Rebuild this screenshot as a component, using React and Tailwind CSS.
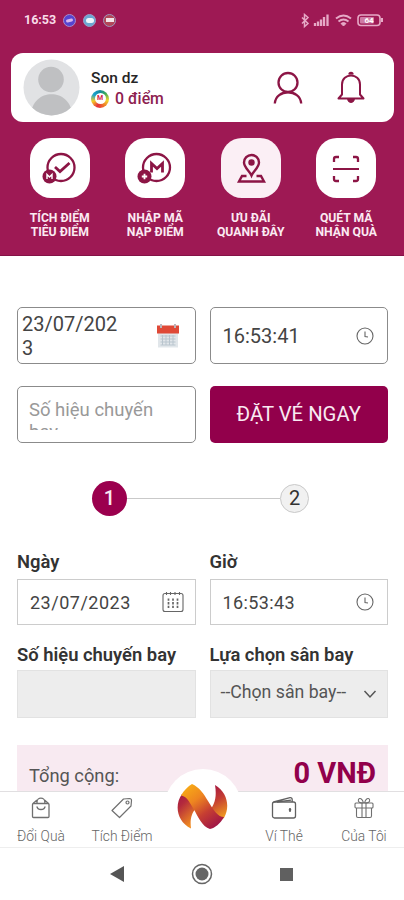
const quickActions = [
  { id: "earn", lines: ["TÍCH ĐIỂM", "TIÊU ĐIỂM"], icon: EarnIcon, tile: "bg-white" },
  { id: "code", lines: ["NHẬP MÃ", "NẠP ĐIỂM"], icon: CodeIcon, tile: "bg-white" },
  { id: "near", lines: ["ƯU ĐÃI", "QUANH ĐÂY"], icon: NearbyIcon, tile: "bg-[#fbeff5]" },
  { id: "scan", lines: ["QUÉT MÃ", "NHẬN QUÀ"], icon: ScanIcon, tile: "bg-white" },
];

/* ICONS */

function EarnIcon() {
  return (
    <svg width="60" height="60" viewBox="0 0 60 60" fill="none" stroke="#8c1545" strokeWidth="2.3">
      <circle cx="31" cy="29.5" r="13.5" />
      <path d="M25 29l5 4.5 9.500-8.500" strokeWidth="2.8" />
      <circle cx="19.5" cy="38.5" r="7" fill="#8c1545" stroke="none" />
      <path d="M17 41v-4.5l2.5 2.5 2.5-2.5V41" stroke="#fff" strokeWidth="1.4" />
    </svg>
  );
}

function CodeIcon() {
  return (
    <svg width="60" height="60" viewBox="0 0 60 60" fill="none" stroke="#8c1545" strokeWidth="2.3">
      <circle cx="31.5" cy="29.5" r="13.5" />
      <path d="M26.500 34.500v-9l5.500 5 5.500-5v9" strokeWidth="2.8" />
      <circle cx="19.5" cy="38.5" r="7" fill="#8c1545" stroke="none" />
      <path d="M16.800 38.500h5.400M19.500 35.800v5.400" stroke="#fff" strokeWidth="1.8" />
    </svg>
  );
}

function NearbyIcon() {
  return (
    <svg width="60" height="60" viewBox="0 0 60 60" fill="none" stroke="#8c1545" strokeWidth="2.4">
      <path d="M30.500 37.500c-2-4.500-7.500-8-7.500-13a7.500 7.500 0 0 1 15 0c0 5-5.500 8.500-7.500 13z" />
      <circle cx="30.500" cy="24.500" r="3.200" fill="#8c1545" stroke="none" />
      <path d="M25.500 38h-4.500l-3 5.500h25L40 38h-4.500" />
    </svg>
  );
}

function ScanIcon() {
  return (
    <svg width="60" height="60" viewBox="0 0 60 60" fill="none" stroke="#8c1545" strokeWidth="2.3">
      <path d="M18 24v-3q0-2 2-2h3M37 19h3q2 0 2 2v3M42 38v3q0 2-2 2h-3M23 43h-3q-2 0-2-2v-3" />
      <path d="M17 31h26" strokeWidth="2" />
    </svg>
  );
}

function ClockIcon() {
  return (
    <svg width="18" height="18" viewBox="0 0 18 18" fill="none" stroke="#666" strokeWidth="1.1">
      <circle cx="9" cy="9" r="8" />
      <path d="M9 4.500v5l3 .5" />
    </svg>
  );
}

function CalendarEmoji() {
  return (
    <svg width="24" height="26" viewBox="0 0 24 26">
      <path d="M2 10h20v14.500H2z" fill="#e1e6ea" />
      <path d="M4.500 13h15M4.500 16h15M4.500 19h15M4.500 22h15M6.500 12v10M10 12v10M13.500 12v10M17 12v10" stroke="#b9c5ce" strokeWidth="1" />
      <path d="M1 2.500h22v8H1z" fill="#df4937" />
      <path d="M5 1v4M19 1v4" stroke="#b9b4ba" strokeWidth="2" />
    </svg>
  );
}

function CalendarIcon() {
  return (
    <svg width="22" height="22" viewBox="0 0 22 22" fill="none" stroke="#666" strokeWidth="1.1">
      <rect x="1" y="2.500" width="20" height="18" rx="2" />
      <path d="M4.500 1v3M8.500 1v3M13 1v3M17.500 1v3" />
      <path d="M6.500 7.500v9.500M11 7.500v9.500M15.500 7.500v9.500" strokeWidth="1.700" strokeDasharray="2.300 1.300" />
    </svg>
  );
}

function BagIcon() {
  return (
    <svg width="20" height="22" viewBox="0 0 20 22" fill="none" stroke="#707070" strokeWidth="1.300">
      <rect x="1.500" y="6.500" width="16.500" height="14" rx="1" />
      <path d="M2 6.500l4-3.500M17.500 6.500l-4-3.500M6 6.500V5a3.900 3.900 0 0 1 7.800 0v1.500" />
      <path d="M6 9.500c.5 4 7.500 4 8 0" strokeWidth="1.500" />
    </svg>
  );
}

function TagIcon() {
  return (
    <svg width="22" height="22" viewBox="0 0 22 22" fill="none" stroke="#707070" strokeWidth="1.200">
      <path d="M1 13.500L12.500 2l6-.5q2 0 2 2L20 9 8.500 20.500z" strokeLinejoin="round" />
      <circle cx="16.500" cy="5.500" r="1.500" />
    </svg>
  );
}

function WalletIcon() {
  return (
    <svg width="26" height="24" viewBox="0 0 26 24" fill="none" stroke="#606060" strokeWidth="1.300">
      <rect x="1.500" y="6" width="23" height="16" rx="2" />
      <path d="M2.500 6L19 1.700q2-.2 2.200 2V6M6 6l14-1.800" />
      <circle cx="19" cy="13.800" r="1.300" fill="#606060" stroke="none" />
      <path d="M19 12v4" strokeWidth="1.500" />
    </svg>
  );
}

function GiftIcon() {
  return (
    <svg width="20" height="22" viewBox="0 0 20 22" fill="none" stroke="#707070" strokeWidth="1.100">
      <rect x="1" y="6" width="18" height="5" rx="1" />
      <path d="M2.500 11v8q0 1.500 1.500 1.500h12q1.500 0 1.500-1.500v-8M8 6v14.500M12 6v14.500" />
      <path d="M9.500 6C6 6 3.500 5 4.500 2.500c1-2 4-1 5 3.500M10.500 6c3.500 0 6-1 5-3.500-1-2-4-1-5 3.500" />
    </svg>
  );
}

function LogoN() {
  return (
    <svg width="52" height="48" viewBox="0 0 52 48">
      <defs>
        <linearGradient id="nLeft" x1="0" y1="0" x2=".5" y2="1">
          <stop offset="0" stopColor="#a01745" />
          <stop offset=".35" stopColor="#b42a3c" />
          <stop offset="1" stopColor="#f08b20" />
        </linearGradient>
        <linearGradient id="nMid" x1=".1" y1="0" x2=".8" y2="1">
          <stop offset="0" stopColor="#f9b015" />
          <stop offset=".35" stopColor="#ee8520" />
          <stop offset=".65" stopColor="#c63e32" />
          <stop offset="1" stopColor="#9c1249" />
        </linearGradient>
        <linearGradient id="nRight" x1=".2" y1="0" x2=".5" y2="1">
          <stop offset="0" stopColor="#a31443" />
          <stop offset=".45" stopColor="#c43d33" />
          <stop offset="1" stopColor="#f3a01f" />
        </linearGradient>
      </defs>
      <path d="M5 11C-3 22 0 39 14 45.500c-1-8 0-15 5-20L12 10z" fill="url(#nLeft)" />
      <path d="M38 2c13 8 15 22 9 33l-7 4-10-9c8-7 10-16 8-28z" fill="url(#nRight)" />
      <path d="M4 12.500C7 7 11 3.500 15 1c7 3 12 10 16 17 6 10 10 16 16 16-4 7-9 11-14 12-8-2-12-13-17-21C12 18 9 13 4 12.500z" fill="url(#nMid)" />
    </svg>
  );
}

/* SECTIONS */

function StatusBar() {
  return (
    <div className="flex h-[53px] items-start justify-between pt-[12px] pr-[20px] pl-[24px]">
      <div className="flex h-4 items-center gap-[7px]">
        <span className="mr-[-1px] w-[33px] text-[12.500px] font-bold whitespace-nowrap text-[#f8dce8]">16:53</span>
        <span className="flex size-[13px] items-center justify-center rounded-full border border-[#a78bca] bg-[#5644d0]">
          <span className="h-[3px] w-[7px] -rotate-12 rounded bg-[#d9b4ee]" />
        </span>
        <span className="flex size-[13px] items-center justify-center rounded-full border border-[#98a0c7] bg-[#6aa6d2]">
          <span className="h-[5px] w-[8px] rounded bg-[#eef5fb]" />
        </span>
        <span className="flex size-[13px] items-center justify-center rounded-full border border-[#9c98bc] bg-[#b34558]">
          <span className="h-[4px] w-[8px] bg-[#f3e5e9]" />
        </span>
      </div>
      <svg width="84" height="16" viewBox="0 0 84 16" fill="none" stroke="#e6a9c6" className="mt-px">
        <path d="M2 4.500l6 6-3.500 3V1.500L8 4.500l-6 6" strokeWidth="1.500" />
        <path d="M15 13v-3M18 13V8.500M21 13V6.500M24 13V4M27.500 13V1.500" strokeWidth="2.300" />
        <path d="M36 5.500q7.500-6 15 0M38.500 8.500q5-4 10 0" strokeWidth="2" />
        <path d="M41 10.500q2.500-2 5 0L43.500 13z" fill="#e6a9c6" />
        <rect x="58" y="2" width="22" height="10.500" rx="3" strokeWidth="1.600" />
        <rect x="60" y="4" width="14" height="6.500" rx="1" fill="#cf7ba5" stroke="none" />
        <path d="M82 5v4" strokeWidth="2" />
        <text x="69" y="10.300" textAnchor="middle" className="text-[8px] font-bold" fill="#fff" stroke="none">64</text>
      </svg>
    </div>
  );
}

function ProfileCard() {
  return (
    <div className="mr-[10px] ml-[11px] flex h-[69px] items-center rounded-[12px] bg-white pr-[29px] pl-[12px]">
      <svg width="57" height="57" viewBox="0 0 57 57">
        <clipPath id="avatar"><circle cx="28.500" cy="28.500" r="28" /></clipPath>
        <g clipPath="url(#avatar)">
          <path d="M0 0h57v57H0z" fill="#e1e2e4" />
          <circle cx="28" cy="20.500" r="12.800" fill="#bfc0c2" />
          <path d="M8 57c0-29 41-29 41 0z" fill="#bfc0c2" />
        </g>
      </svg>
      <div className="mt-[2px] ml-[11px] flex-1">
        <p className="text-[15.500px] leading-[20px] font-medium text-[#262626]">Son dz</p>
        <p className="flex h-[22px] items-center gap-[6px] text-[15.800px] font-medium text-[#8d204f]">
          <span className="flex size-[18px] items-center justify-center rounded-full bg-[conic-gradient(#1689a0,#39a85a_12%,#f1d52c_28%,#ef742b_42%,#e52e3c_55%,#f5cb27_70%,#16a3ce_85%,#1689a0)]">
            <span className="flex size-[11px] items-center justify-center rounded-full bg-white text-[7px] font-bold text-[#d52343]">M</span>
          </span>
          0 điểm
        </p>
      </div>
      <svg width="30" height="34" viewBox="0 0 30 34" fill="none" stroke="#8c1545" strokeWidth="2.300">
        <circle cx="15" cy="11.500" r="9.500" />
        <path d="M1.800 32.500c1-15 25.400-15 26.400 0" />
      </svg>
      <svg width="28" height="34" viewBox="0 0 28 34" fill="none" stroke="#8c1545" strokeWidth="2" className="ml-[34px]">
        <path d="M1.500 27.500L5 23.500V13.500c0-12 18-12 18 0v10l3.500 4z" strokeLinejoin="round" />
        <path d="M12.300 3.500c0-2.500 3.400-2.500 3.400 0" fill="#8c1545" />
        <path d="M10.500 28.500h7q-.8 3-3.500 3t-3.500-3z" fill="#8c1545" strokeWidth="1" />
      </svg>
    </div>
  );
}

function DateTimeForm() {
  return (
    <div className="grid grid-cols-2 gap-x-[14px] gap-y-[22px]">
      <div className="flex h-[57px] items-center rounded-[5px] border border-[#8b8b8b] pr-[15px] pl-[4px] text-[20px] leading-[24px] text-[#444]">
        <span className="w-[103px] break-all">23/07/2023</span>
        <span className="ml-auto"><CalendarEmoji /></span>
      </div>
      <div className="flex h-[57px] items-center justify-between rounded-[5px] border border-[#8b8b8b] pr-[13px] pl-[12px] text-[20px] text-[#444]">
        16:53:41
        <ClockIcon />
      </div>
      <div className="h-[57px] overflow-hidden rounded-[5px] border border-[#8b8b8b] px-[11px] pt-[12px] pb-[12px]">
        <div className="h-[31px] w-[140px] overflow-hidden text-[18.500px] leading-[22px] text-[#999]">
          Số hiệu chuyến bay
        </div>
      </div>
      <button className="h-[57px] rounded-[5px] bg-[#92004b] text-[20.300px] text-[#f9eaf2]">
        ĐẶT VÉ NGAY
      </button>
    </div>
  );
}

function Stepper() {
  return (
    <div className="mt-[37px] flex h-[36px] items-center pr-[79px] pl-[75px] text-[20px]">
      <span className="flex size-[35px] items-center justify-center rounded-full bg-[#9b004e] font-medium text-[#f8e7f0]">1</span>
      <span className="h-px flex-1 bg-[#c9c9c9]" />
      <span className="flex size-[29px] items-center justify-center rounded-full border border-[#c9c9c9] bg-[#f1f1f1] text-[#333]">2</span>
    </div>
  );
}

function FlightForm() {
  return (
    <div className="mt-[34px] grid grid-cols-2 gap-x-[14px] gap-y-[18px] text-[18px] text-[#444]">
      <div>
        <p className="mb-[5px] text-[18.400px] leading-[24px] font-semibold text-[#333]">Ngày</p>
        <div className="flex h-[46px] items-center justify-between border border-[#ccc] pr-[11px] pl-[12px] tracking-[0.5px]">
          23/07/2023
          <CalendarIcon />
        </div>
      </div>
      <div>
        <p className="mb-[5px] text-[18.400px] leading-[24px] font-semibold text-[#333]">Giờ</p>
        <div className="flex h-[46px] items-center justify-between border border-[#ccc] pr-[13px] pl-[12px] tracking-[0.4px]">
          16:53:43
          <ClockIcon />
        </div>
      </div>
      <div>
        <p className="mb-[3px] text-[18.400px] leading-[24px] font-semibold whitespace-nowrap text-[#333]">Số hiệu chuyến bay</p>
        <div className="h-[48px] border border-[#e2e2e2] bg-[#ededed]" />
      </div>
      <div>
        <p className="mb-[3px] text-[18.400px] leading-[24px] font-semibold whitespace-nowrap text-[#333]">Lựa chọn sân bay</p>
        <div className="flex h-[48px] items-center justify-between border border-[#e2e2e2] bg-[#ededed] pr-[10px] pb-[3px] pl-[10px] text-[17.700px] whitespace-nowrap text-[#555]">
          --Chọn sân bay--
          <svg width="14" height="10" viewBox="0 0 14 10" fill="none" stroke="#555" strokeWidth="1.500" className="mt-[2px]">
            <path d="M1.500 2L7 8l5.500-6" />
          </svg>
        </div>
      </div>
    </div>
  );
}

function TabItem({ label, children, width }) {
  return (
    <div className={`flex flex-col items-center ${width}`}>
      <div className="flex h-[24px] items-center">{children}</div>
      <span className="mt-[7px] text-[13.800px] leading-[18px] font-light whitespace-nowrap text-[#666]">{label}</span>
    </div>
  );
}

function TabBar() {
  return (
    <nav className="relative flex h-[57px] border-y border-t-[#e1dfe1] border-b-[#eee] bg-white pt-[4px]">
      <TabItem label="Đổi Quà" width="w-[82px]"><BagIcon /></TabItem>
      <TabItem label="Tích Điểm" width="w-[80px]"><TagIcon /></TabItem>
      <div className="w-[82px]" />
      <TabItem label="Ví Thẻ" width="w-[80px]"><WalletIcon /></TabItem>
      <TabItem label="Của Tôi" width="w-[80px]"><GiftIcon /></TabItem>
      <div className="absolute top-[-23px] left-[164px] flex h-[77px] w-[78px] items-center justify-center rounded-t-full bg-white pb-px">
        <LogoN />
      </div>
    </nav>
  );
}

export default function App() {
  return (
    <div className="flex h-[900px] w-[404px] flex-col overflow-hidden bg-white font-['Roboto','Liberation_Sans',sans-serif]">

      {/* HEADER */}
      <header className="h-[256px] shrink-0 border-b border-[#841246] bg-[#9e1954]">
        <StatusBar />
        <ProfileCard />
        <div className="mt-[16px] flex pr-[10px] pl-[12px]">
          {quickActions.map(({ id, lines, icon: Icon, tile }) => (
            <div key={id} className="flex w-[95.500px] flex-col items-center">
              <div className={`size-[60px] rounded-[21px] ${tile}`}>
                <Icon />
              </div>
              <p className="mt-[13px] text-center text-[12.200px] leading-[14px] font-bold whitespace-nowrap text-[#fbeaf2]">
                {lines[0]}<br />{lines[1]}
              </p>
            </div>
          ))}
        </div>
      </header>

      {/* BOOKING */}
      <main className="min-h-0 flex-1 overflow-hidden pt-[51px] pr-[16px] pl-[17px]">
        <DateTimeForm />
        <Stepper />
        <FlightForm />
        <div className="mt-[27px] flex h-[80px] justify-between bg-[#f8eaf1] pr-[12px] pl-[12px]">
          <span className="mt-[19px] text-[18.300px] leading-[24px] text-[#555]">Tổng cộng:</span>
          <span className="mt-[11px] text-[29px] leading-[34px] font-bold text-[#92004b]">0 VNĐ</span>
        </div>
      </main>

      <TabBar />

      {/* ANDROID BUTTONS */}
      <div className="flex h-[52px] shrink-0 items-center justify-between pr-[111px] pl-[110px]">
        <svg width="14" height="16" viewBox="0 0 14 16" fill="#555"><path d="M14 0v16L0 8z" /></svg>
        <svg width="22" height="22" viewBox="0 0 22 22" fill="#666" stroke="#666">
          <circle cx="11" cy="11" r="9.500" fill="none" strokeWidth="1.500" />
          <circle cx="11" cy="11" r="6.500" stroke="none" />
        </svg>
        <span className="size-[13px] bg-[#606060]" />
      </div>
    </div>
  );
}
